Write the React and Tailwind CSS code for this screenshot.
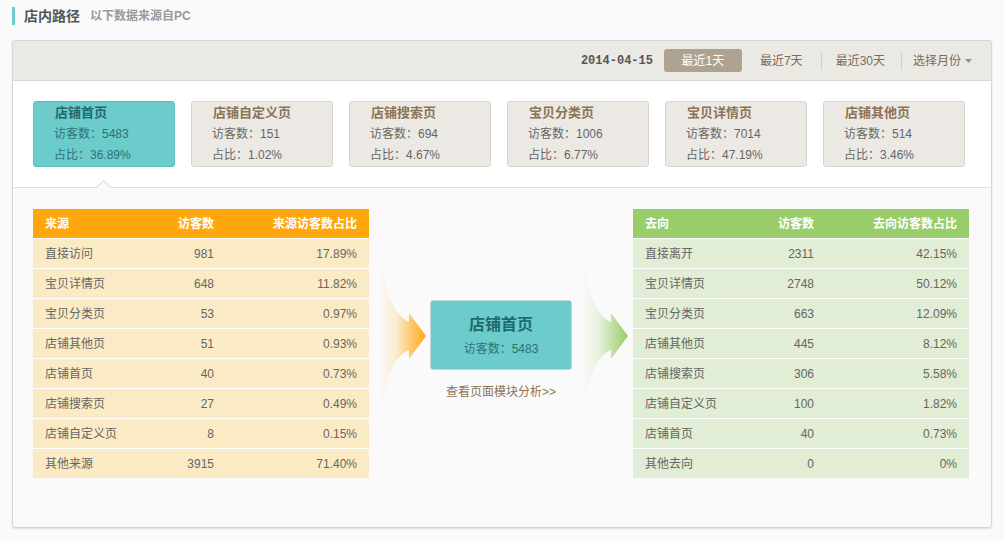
const FONT = {
  fontFamily: '"Liberation Sans", "Noto Sans CJK SC", sans-serif',
};

const cards = [
  { name: "店铺首页", uv: "5483", pct: "36.89%", active: true },
  { name: "店铺自定义页", uv: "151", pct: "1.02%" },
  { name: "店铺搜索页", uv: "694", pct: "4.67%" },
  { name: "宝贝分类页", uv: "1006", pct: "6.77%" },
  { name: "宝贝详情页", uv: "7014", pct: "47.19%" },
  { name: "店铺其他页", uv: "514", pct: "3.46%" },
];

const sources = [
  ["直接访问", "981", "17.89%"],
  ["宝贝详情页", "648", "11.82%"],
  ["宝贝分类页", "53", "0.97%"],
  ["店铺其他页", "51", "0.93%"],
  ["店铺首页", "40", "0.73%"],
  ["店铺搜索页", "27", "0.49%"],
  ["店铺自定义页", "8", "0.15%"],
  ["其他来源", "3915", "71.40%"],
];

const targets = [
  ["直接离开", "2311", "42.15%"],
  ["宝贝详情页", "2748", "50.12%"],
  ["宝贝分类页", "663", "12.09%"],
  ["店铺其他页", "445", "8.12%"],
  ["店铺搜索页", "306", "5.58%"],
  ["店铺自定义页", "100", "1.82%"],
  ["店铺首页", "40", "0.73%"],
  ["其他去向", "0", "0%"],
];

const Card = ({ name, uv, pct, active }) => (
  <div
    className={
      "w-[142px] h-[66px] rounded-[3px] border pl-[20px] " +
      (active
        ? "bg-[#6ccbcb] border-[#5fbdbd] text-[#2b7477]"
        : "bg-[#ece9e4] border-[#d8d4cd] text-[#666]")
    }
  >
    <div
      className={
        "h-[22px] leading-[22px] text-[13px] font-bold pl-[1px] " +
        (active ? "text-[#1f6a6d]" : "text-[#8b7356]")
      }
    >
      {name}
    </div>
    <div className="h-[21px] leading-[21px] text-[12px]">访客数：{uv}</div>
    <div className="h-[21px] leading-[21px] text-[12px]">占比：{pct}</div>
  </div>
);

const Table = ({ head, rows, headBg, rowBg }) => (
  <div className="w-[336px]">
    <div
      className={
        "h-[29px] flex items-center text-[12px] font-bold text-white " + headBg
      }
    >
      <div className="w-[121px] pl-[12px]">{head[0]}</div>
      <div className="w-[60px] text-right">{head[1]}</div>
      <div className="flex-1 text-right pr-[12px]">{head[2]}</div>
    </div>
    {rows.map((r) => (
      <div
        key={r[0]}
        className={
          "h-[30px] border-t border-white flex items-center text-[12px] text-[#666] " +
          rowBg
        }
      >
        <div className="w-[121px] pl-[12px]">{r[0]}</div>
        <div className="w-[60px] text-right">{r[1]}</div>
        <div className="flex-1 text-right pr-[12px]">{r[2]}</div>
      </div>
    ))}
  </div>
);

const Arrow = ({ id, color }) => (
  <svg width="46" height="170" viewBox="0 0 46 170" className="block">
    <defs>
      <linearGradient id={id} x1="0" y1="0" x2="1" y2="0">
        <stop offset="0" stopColor={color} stopOpacity="0" />
        <stop offset="0.35" stopColor={color} stopOpacity="0.18" />
        <stop offset="1" stopColor={color} stopOpacity="1" />
      </linearGradient>
    </defs>
    <path
      d="M0 0 C4 40 14 66 29 72 L29 63 L46 86 L29 109 L29 100 C14 106 4 130 0 170 Z"
      fill={`url(#${id})`}
    />
  </svg>
);

export default function App() {
  return (
    <div className="w-full h-[541px] bg-[#fafafa] overflow-hidden" style={FONT}>
      <div className="h-[40px] pt-[7px] pl-[12px] flex items-start">
        <div className="w-[3px] h-[18px] bg-[#6ccbcb]" />
        <div className="ml-[9px] h-[18px] flex items-center">
          <span className="text-[14px] font-bold text-[#555]">店内路径</span>
          <span className="ml-[10px] text-[12px] font-bold text-[#999]">
            以下数据来源自PC
          </span>
        </div>
      </div>

      <div className="mx-[12px] h-[488px] border border-[#d6d6d6] rounded-[3px] bg-[#fafafa] shadow-[0_1px_2px_rgba(0,0,0,0.12)] flex flex-col overflow-hidden">
        <div className="h-[40px] shrink-0 bg-[#ebe9e4] border-b border-[#dcd9d2] flex items-center justify-end pr-[19px] text-[12px]">
          <span
            className="text-[12px] font-bold text-[#555]"
            style={{ fontFamily: '"Liberation Mono", monospace' }}
          >
            2014-04-15
          </span>
          <button className="ml-[11px] w-[78px] h-[23px] rounded-[3px] bg-[#aea290] text-white text-[12px]">
            最近1天
          </button>
          <span className="ml-[18px] text-[#7d6a55]">最近7天</span>
          <span className="ml-[18px] w-px h-[18px] bg-[#d3cec6]" />
          <span className="ml-[14px] text-[#7d6a55]">最近30天</span>
          <span className="ml-[16px] w-px h-[18px] bg-[#d3cec6]" />
          <span className="ml-[11px] text-[#7d6a55]">选择月份</span>
          <svg width="7" height="4" viewBox="0 0 7 4" className="ml-[4px]">
            <path d="M0 0 H7 L3.5 4 Z" fill="#9d9384" />
          </svg>
        </div>

        <div className="relative h-[107px] shrink-0 bg-white border-b border-[#dedede] pt-[20px] pl-[20px] flex gap-[16px]">
          {cards.map((c) => (
            <Card key={c.name} {...c} />
          ))}
          <div className="absolute left-[85px] bottom-[-6px] w-[11px] h-[11px] rotate-45 bg-[#fafafa] border-l border-t border-[#dedede]" />
        </div>

        <div className="flex-1 pt-[21px] pl-[20px] flex items-start">
          <Table
            head={["来源", "访客数", "来源访客数占比"]}
            rows={sources}
            headBg="bg-[#ffa70f]"
            rowBg="bg-[#fbebc5]"
          />
          <div className="w-[264px] flex items-start">
            <div className="ml-[11px] mt-[41px]">
              <Arrow id="ga" color="#ffa70f" />
            </div>
            <div className="ml-[4px] mt-[91px] w-[142px] flex flex-col items-center">
              <div className="w-[142px] h-[70px] rounded-[3px] border border-[#c5d6d6] bg-[#6ccbcb] flex flex-col items-center">
                <div className="mt-[14px] h-[20px] leading-[20px] text-[16px] font-bold text-[#1f6a6d]">
                  店铺首页
                </div>
                <div className="mt-[4px] leading-[20px] text-[12px] text-[#2b7477]">
                  访客数：5483
                </div>
              </div>
              <div className="mt-[15px] leading-[14px] text-[12px] text-[#8b7356]">
                查看页面模块分析&gt;&gt;
              </div>
            </div>
            <div className="ml-[10px] mt-[41px]">
              <Arrow id="gb" color="#99cd69" />
            </div>
          </div>
          <Table
            head={["去向", "访客数", "去向访客数占比"]}
            rows={targets}
            headBg="bg-[#99cd69]"
            rowBg="bg-[#e1edd4]"
          />
        </div>
      </div>
    </div>
  );
}
